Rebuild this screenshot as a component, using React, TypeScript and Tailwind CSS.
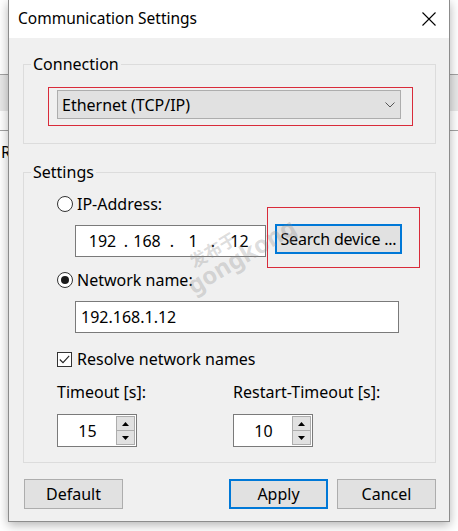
import type { ReactNode } from "react";

function Backdrop() {
  return (
    <div className="flex flex-col">
      <div className="h-[74px]" />
      <div className="h-px bg-[#a3a3a3]" />
      <div className="h-[36px] bg-[#e8e8e8]" />
      <div className="h-[19px]" />
      <div className="h-px bg-[#a3a3a3]" />
      <div className="mt-[11px] pl-px text-[16px] leading-[20px]">R</div>
    </div>
  );
}

function TitleBar() {
  return (
    <div className="flex h-[38px] items-center justify-between bg-white pl-[9px] pr-[13px]">
      <span className="text-[15.5px]">Communication Settings</span>
      <svg width="14" height="14" viewBox="0 0 14 14" className="text-black">
        <path d="M0.5 0.5 L13.5 13.5 M13.5 0.5 L0.5 13.5" stroke="currentColor" strokeWidth="1.1" />
      </svg>
    </div>
  );
}

function Group({ title, children, className }: { title: string; children: ReactNode; className?: string }) {
  return (
    <fieldset className={"border border-[#dcdcdc] " + (className ?? "")}>
      <legend className="ml-[7px] px-[2px] text-[16px] leading-[20px]">{title}</legend>
      {children}
    </fieldset>
  );
}

// red annotation frame drawn over a control
function Highlight({ w, h, className }: { w: number; h: number; className: string }) {
  return (
    <svg width={w} height={h} className={"pointer-events-none absolute z-10 " + className}>
      <rect x="0.5" y="0.5" width={w - 1} height={h - 1} fill="none" stroke="#d92b3a" strokeWidth="1" />
    </svg>
  );
}

function Radio({ checked, label }: { checked?: boolean; label: string }) {
  return (
    <div className="flex h-[20px] items-center gap-[4px]">
      <span className="flex h-[16px] w-[16px] items-center justify-center rounded-full border border-[#333] bg-white">
        {checked && <span className="h-[8px] w-[8px] rounded-full bg-[#1a1a1a]" />}
      </span>
      <span className="text-[16px]">{label}</span>
    </div>
  );
}

function Spin({ value }: { value: string }) {
  return (
    <div className="flex h-[33px] w-[80px] items-stretch border border-[#7a7a7a] bg-white p-px">
      <span className="flex flex-1 items-center justify-center text-[16px]">{value}</span>
      <div className="flex w-[19px] flex-col">
        <span className="flex flex-1 items-center justify-center border border-[#adadad] bg-[#e1e1e1]">
          <svg width="7" height="4" viewBox="0 0 7 4"><path d="M3.5 0 L7 4 L0 4 Z" fill="#000" /></svg>
        </span>
        <span className="flex flex-1 items-center justify-center border border-t-0 border-[#adadad] bg-[#e1e1e1]">
          <svg width="7" height="4" viewBox="0 0 7 4"><path d="M0 0 L7 0 L3.5 4 Z" fill="#000" /></svg>
        </span>
      </div>
    </div>
  );
}

function Button({ label, focused }: { label: string; focused?: boolean }) {
  return (
    <div
      className={
        "flex h-[30px] w-[99px] items-center justify-center bg-[#e1e1e1] text-[16px] " +
        (focused ? "border-2 border-[#0078d7]" : "border border-[#adadad]")
      }
    >
      {label}
    </div>
  );
}

export default function App() {
  return (
    <div className="relative h-[531px] w-[458px] overflow-hidden bg-white font-['Noto_Sans',sans-serif] text-black">
      <Backdrop />

      <div className="absolute left-[8px] top-0 flex h-[522px] w-[442px] flex-col border-x border-b border-[#8c8c8c] bg-[#f0f0f0] shadow-[0_3px_10px_rgba(0,0,0,0.3)]">
        <TitleBar />

        <div className="flex flex-col pl-[14px] pr-[13px]">
          <Group title="Connection" className="mt-[16px] pb-[24px]">
            <div className="relative ml-[33px] mt-[16px] w-[344px]">
              <div className="flex h-[29px] items-center justify-between border border-[#adadad] bg-[#e1e1e1] pl-[4px] pr-[5px] text-[16px]">
                <span>Ethernet (TCP/IP)</span>
                <svg width="10" height="6" viewBox="0 0 10 6">
                  <path d="M0.5 0.5 L5 5 L9.5 0.5" fill="none" stroke="#555" strokeWidth="1" />
                </svg>
              </div>
              <Highlight w={365} h={39} className="-left-[9px] -top-[3px]" />
            </div>
          </Group>

          <Group title="Settings" className="mt-[18px] pb-[15px]">
            <div className="flex flex-col pl-[33px]">
              <div className="mt-[12px]">
                <Radio label="IP-Address:" />
              </div>
              <div className="ml-[18px] mt-[11px] flex items-start gap-[9px]">
                <div className="flex h-[32px] w-[191px] items-center border border-[#7a7a7a] bg-white pl-[9px] text-[16px]">
                  <span className="w-[35px] text-center">192</span>
                  <span className="w-[12px] text-center">.</span>
                  <span className="w-[30px] text-center">168</span>
                  <span className="w-[20px] text-center">.</span>
                  <span className="w-[22px] text-center">1</span>
                  <span className="w-[18px] text-center">.</span>
                  <span className="w-[35px] text-center">12</span>
                </div>
                <div className="relative -mt-px">
                  <div className="flex h-[30px] w-[127px] items-center justify-center border-2 border-[#0078d7] bg-[#e1e1e1] text-[16px] tracking-[-0.2px]">
                    Search device ...
                  </div>
                  <Highlight w={153} h={61} className="-left-[8px] -top-[17px]" />
                </div>
              </div>
              <div className="mt-[13px]">
                <Radio checked label="Network name:" />
              </div>
              <div className="ml-[18px] mt-[11px] flex h-[32px] w-[324px] items-center border border-[#7a7a7a] bg-white pl-[5px] text-[16px]">
                192.168.1.12
              </div>
              <div className="mt-[16px] flex h-[20px] items-center gap-[5px]">
                <span className="flex h-[15px] w-[15px] items-center justify-center border border-[#333] bg-white">
                  <svg width="11" height="9" viewBox="0 0 11 9">
                    <path d="M0.8 4.5 L4 7.7 L10.2 0.8" fill="none" stroke="#222" strokeWidth="1.1" />
                  </svg>
                </span>
                <span className="text-[16px]">Resolve network names</span>
              </div>
              <div className="mt-[13px] grid grid-cols-[176px_1fr]">
                <div className="flex flex-col gap-[12px]">
                  <span className="h-[20px] text-[16px] leading-[20px]">Timeout [s]:</span>
                  <Spin value="15" />
                </div>
                <div className="flex flex-col gap-[12px]">
                  <span className="h-[20px] text-[16px] leading-[20px]">Restart-Timeout [s]:</span>
                  <Spin value="10" />
                </div>
              </div>
            </div>
          </Group>

          <div className="mt-[16px] flex items-center pl-px">
            <Button label="Default" />
            <div className="flex-1" />
            <Button label="Apply" focused />
            <div className="w-[9px]" />
            <Button label="Cancel" />
          </div>
        </div>
      </div>

      <div className="pointer-events-none absolute left-[176px] top-[228px] -rotate-[31deg] font-bold leading-none text-[#8a8a8a]/30">
        <div className="pl-[14px] font-['Noto_Sans_CJK_SC',sans-serif] text-[17px]">发布于</div>
        <div className="text-[24px]">gongkong</div>
      </div>
    </div>
  );
}
